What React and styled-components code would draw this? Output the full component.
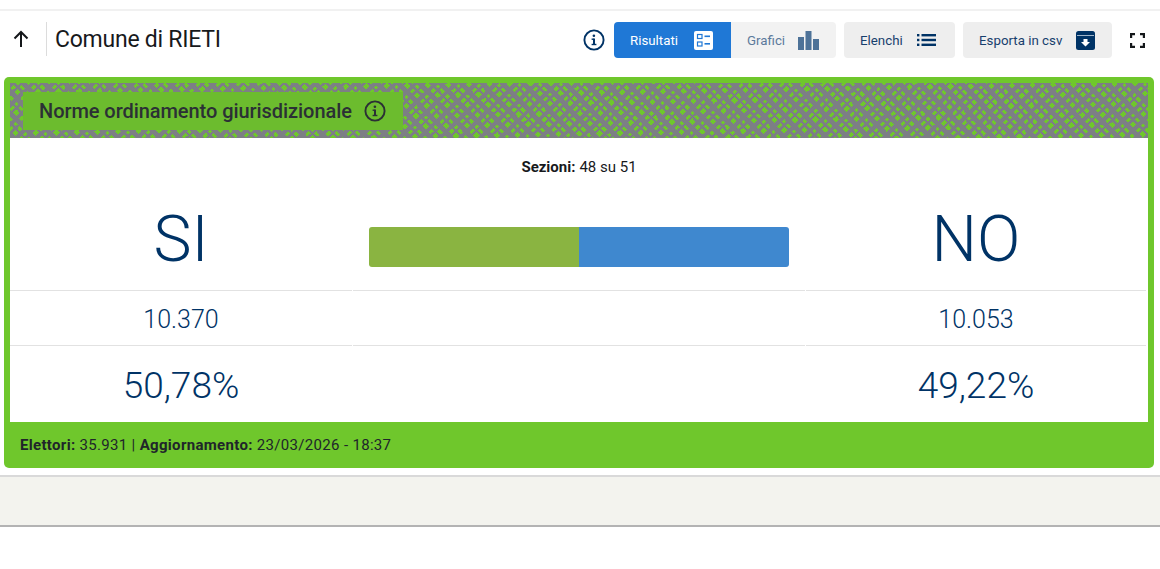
import React from 'react';
import styled, { createGlobalStyle } from 'styled-components';

const GlobalStyle = createGlobalStyle`
  html, body {
    margin: 0;
    padding: 0;
    background: #fff;
    font-family: 'Roboto', 'Liberation Sans', sans-serif;
  }
`;

const InfoIcon = ({ size = 22, color = '#003366' }) => (
  <svg width={size} height={size} viewBox='0 0 22 22' fill='none'>
    <circle cx='11' cy='11' r='9.6' stroke={color} strokeWidth='1.9' />
    <rect x='10' y='9.5' width='2' height='6.5' fill={color} />
    <rect x='8.6' y='9.5' width='2' height='1.4' fill={color} />
    <rect x='8.6' y='14.8' width='4.8' height='1.4' fill={color} />
    <circle cx='10.9' cy='6.8' r='1.3' fill={color} />
  </svg>
);

const UpArrow = () => (
  <svg width='18' height='18' viewBox='0 0 18 18' fill='none'>
    <path d='M9 17V2M2.5 8.5 9 2l6.5 6.5' stroke='#14171a' strokeWidth='2' />
  </svg>
);

const ListCardIcon = () => (
  <svg width='19' height='19' viewBox='0 0 19 19'>
    <rect width='19' height='19' rx='2' fill='#fff' />
    <rect x='3.5' y='3.5' width='4.5' height='4' fill='none' stroke='#1f78d6' strokeWidth='1.2' />
    <rect x='3.5' y='11' width='4.5' height='4' fill='none' stroke='#1f78d6' strokeWidth='1.2' />
    <rect x='10.5' y='4.5' width='5.5' height='1.6' fill='#1f78d6' />
    <rect x='10.5' y='12' width='5.5' height='1.6' fill='#1f78d6' />
  </svg>
);

const BarsIcon = () => (
  <svg width='21' height='19' viewBox='0 0 21 19'>
    <rect x='0' y='6' width='6' height='13' fill='#4d7298' />
    <rect x='7.5' y='0' width='6' height='19' fill='#4d7298' />
    <rect x='15' y='8' width='6' height='11' fill='#4d7298' />
  </svg>
);

const ListIcon = () => (
  <svg width='19' height='12' viewBox='0 0 19 12'>
    <rect x='0' y='0' width='2.4' height='2.4' fill='#003366' />
    <rect x='0' y='4.8' width='2.4' height='2.4' fill='#003366' />
    <rect x='0' y='9.6' width='2.4' height='2.4' fill='#003366' />
    <rect x='4.5' y='0' width='14.5' height='2.4' fill='#003366' />
    <rect x='4.5' y='4.8' width='14.5' height='2.4' fill='#003366' />
    <rect x='4.5' y='9.6' width='14.5' height='2.4' fill='#003366' />
  </svg>
);

const ArchiveIcon = () => (
  <svg width='19' height='19' viewBox='0 0 19 19'>
    <rect width='19' height='19' rx='2.5' fill='#003366' />
    <rect x='1' y='4' width='17' height='1' fill='#9fb4c9' />
    <path d='M7.5 8h4v3H14l-4.5 4.5L5 11h2.5z' fill='#fff' />
  </svg>
);

const FullscreenIcon = () => (
  <svg width='15' height='15' viewBox='0 0 15 15' fill='none'>
    <path d='M1 5V1h4M10 1h4v4M14 10v4h-4M5 14H1v-4' stroke='#14171a' strokeWidth='2.4' />
  </svg>
);

const Header = styled.header`
  display: flex;
  align-items: center;
  height: 58px;
  margin-top: 9px;
  padding: 0 15px 0 11px;
  border-top: 2px solid #f1f1f1;
  box-sizing: border-box;
`;

const BackButton = styled.div`
  display: flex;
  align-items: center;
  justify-content: center;
  width: 20px;
  height: 34px;
  padding-right: 15px;
  border-right: 1px solid #dcdcdc;
`;

const Title = styled.h1`
  margin: 0 0 0 8px;
  font-size: 23px;
  font-weight: 400;
  color: #17191c;
  letter-spacing: -0.25px;
  flex: 1;
`;

const Toolbar = styled.div`
  display: flex;
  align-items: center;
  gap: 8px;
  padding-top: 2px;
`;

const InfoSlot = styled.div`
  display: flex;
  margin-right: 1px;
`;

const Segmented = styled.div`
  display: flex;
`;

const ToolButton = styled.div`
  display: flex;
  align-items: center;
  justify-content: space-between;
  height: 36px;
  box-sizing: border-box;
  padding: 0 ${(p) => p.$pr || 16}px 0 16px;
  width: ${(p) => p.$w}px;
  font-size: 13.3px;
  color: ${(p) => (p.$active ? '#fff' : p.$muted ? '#5c7a9c' : '#17406d')};
  background: ${(p) => (p.$active ? '#1f78d6' : p.$muted ? '#f2f2f2' : '#eeeeee')};
  border-radius: ${(p) => p.$radius || '4px'};
`;

const FullscreenSlot = styled.div`
  display: flex;
  margin-left: 10px;
`;

const Card = styled.section`
  width: 1150px;
  height: 391px;
  margin: 10px 0 0 4px;
  box-sizing: border-box;
  display: flex;
  flex-direction: column;
  background: #6fc72c;
  border-radius: 5px;
  padding: 6px 6px 0;
`;

const CardTop = styled.div`
  height: 55px;
  box-sizing: border-box;
  padding: 9px 0 0 13px;
  background-color: #6fc72c;
  background-image:
    repeating-linear-gradient(46deg, #7d7f85 0 5px, transparent 5px 9.5px, #7d7f85 9.5px 12px, transparent 12px 15px),
    repeating-linear-gradient(-44deg, #7d7f85 0 4px, transparent 4px 8.5px, #7d7f85 8.5px 11px, transparent 11px 14px);
`;

const Badge = styled.div`
  display: flex;
  align-items: center;
  gap: 12px;
  width: 380px;
  height: 38px;
  box-sizing: border-box;
  padding: 0 16px;
  background: #6cbc2e;
  color: #2b3035;
  font-size: 20px;
  font-weight: 500;
  letter-spacing: -0.06px;
  white-space: nowrap;
`;

const CardBody = styled.div`
  flex: 1;
  background: #fff;
`;

const Sections = styled.div`
  height: 57px;
  display: flex;
  align-items: center;
  justify-content: center;
  font-size: 15px;
  color: #17191c;
  b {
    font-weight: 700;
    margin-right: 4px;
  }
`;

const ResultGrid = styled.div`
  display: grid;
  grid-template-columns: 342px 452px 340px;
  column-gap: 1px;
`;

const Cell = styled.div`
  display: flex;
  align-items: center;
  justify-content: center;
  height: ${(p) => p.$h}px;
  box-sizing: border-box;
  padding: ${(p) => p.$nudge || 0}px 0 ${(p) => p.$lift || 0}px;
  color: #003366;
  font-size: ${(p) => p.$size}px;
  font-weight: 300;
  border-bottom: ${(p) => (p.$line ? '1px solid #e2e2e2' : 'none')};
`;

const Bar = styled.div`
  display: flex;
  width: 420px;
  height: 40px;
  margin-top: 9px;
  border-radius: 3px;
  overflow: hidden;
`;

const BarPart = styled.div`
  flex: 1;
  height: 100%;
  background: ${(p) => p.$color};
`;

const CardFoot = styled.footer`
  height: 46px;
  display: flex;
  align-items: center;
  margin: 0 -6px;
  padding-left: 16px;
  font-size: 15px;
  letter-spacing: 0.32px;
  color: #20252a;
  white-space: pre;
  b {
    font-weight: 700;
  }
`;

const BottomStrip = styled.div`
  height: 52px;
  margin-top: 7px;
  box-sizing: border-box;
  background: #f3f3ee;
  border-top: 2px solid #d9d9d9;
  border-bottom: 2px solid #b3b3b3;
`;

const results = [
  { label: 'SI', votes: '10.370', pct: '50,78%' },
  { label: 'NO', votes: '10.053', pct: '49,22%' },
];

export default function App() {
  const [si, no] = results;
  return (
    <>
      <GlobalStyle />
      <Header>
        <BackButton>
          <UpArrow />
        </BackButton>
        <Title>Comune di RIETI</Title>
        <Toolbar>
          <InfoSlot>
            <InfoIcon />
          </InfoSlot>
          <Segmented>
            <ToolButton $active $w={117} $pr={18} $radius='4px 0 0 4px'>
              Risultati <ListCardIcon />
            </ToolButton>
            <ToolButton $muted $w={105} $pr={17} $radius='0 4px 4px 0'>
              Grafici <BarsIcon />
            </ToolButton>
          </Segmented>
          <ToolButton $w={111} $pr={19}>
            Elenchi <ListIcon />
          </ToolButton>
          <ToolButton $w={149} $pr={17}>
            Esporta in csv <ArchiveIcon />
          </ToolButton>
          <FullscreenSlot>
            <FullscreenIcon />
          </FullscreenSlot>
        </Toolbar>
      </Header>
      <Card>
        <CardTop>
          <Badge>
            Norme ordinamento giurisdizionale <InfoIcon color='#2b3035' />
          </Badge>
        </CardTop>
        <CardBody>
          <Sections>
            <b>Sezioni:</b> 48 su 51
          </Sections>
          <ResultGrid>
            <Cell $h={96} $size={64} $lift={7} $line>{si.label}</Cell>
            <Cell $h={96} $line>
              <Bar>
                <BarPart $color='#8ab441' />
                <BarPart $color='#3f88cf' />
              </Bar>
            </Cell>
            <Cell $h={96} $size={64} $lift={7} $line>{no.label}</Cell>
            <Cell $h={55} $size={25} $nudge={3} $line>{si.votes}</Cell>
            <Cell $h={55} $line />
            <Cell $h={55} $size={25} $nudge={3} $line>{no.votes}</Cell>
            <Cell $h={75} $size={37} $nudge={4}>{si.pct}</Cell>
            <Cell $h={75} />
            <Cell $h={75} $size={37} $nudge={4}>{no.pct}</Cell>
          </ResultGrid>
        </CardBody>
        <CardFoot>
          <b>Elettori:</b> 35.931 | <b>Aggiornamento:</b> 23/03/2026 - 18:37
        </CardFoot>
      </Card>
      <BottomStrip />
    </>
  );
}
